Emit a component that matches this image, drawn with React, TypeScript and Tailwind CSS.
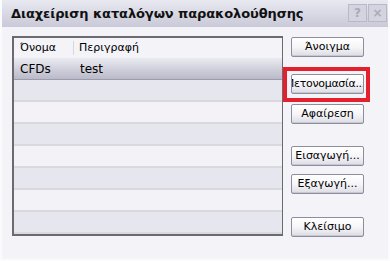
import React from "react";

const font = { fontFamily: "Tahoma, 'DejaVu Sans', 'Noto Sans', sans-serif" };

function Btn({ label, className = "", end = false }: { label: string; className?: string; end?: boolean }) {
  return (
    <div
      className={`w-[73px] h-[20px] flex items-center ${end ? "justify-end" : "justify-center"} overflow-hidden whitespace-nowrap rounded-[2px] border border-[#8d8d9e] bg-gradient-to-b from-[#ffffff] via-[#f6f6f9] to-[#dcdce4] text-[11px] text-black shadow-[inset_0_-1px_0_#c8c8d2] ${className}`}
    >
      <span className={`shrink-0 ${end ? "mr-[-2px] tracking-[-0.3px]" : ""}`}>{label}</span>
    </div>
  );
}

export default function App() {
  const rows = [0, 1, 2, 3, 4, 5, 6];
  return (
    <div className="w-[390px] h-[261px] bg-[#f3f3f8] flex flex-col overflow-hidden border-l-2 border-r-2 border-b-2 border-[#fbfbfd]" style={font}>
      <div className="h-[27px] shrink-0 flex items-center justify-between bg-gradient-to-b from-[#e9e9f1] to-[#c9c9d8] pl-[9px] pr-[1px]">
        <span className="text-[13px] font-bold text-[#111] tracking-[-0.1px]">Διαχείριση καταλόγων παρακολούθησης</span>
        <div className="flex gap-[1px] self-start mt-[4px]">
          <div className="w-[19px] h-[18px] flex items-center justify-center border border-[#b8b8c6] bg-[#d4d4e0] text-[12px] font-bold text-[#a9a9b8]">?</div>
          <div className="w-[19px] h-[18px] flex items-center justify-center border border-[#b8b8c6] bg-[#d4d4e0] text-[12px] font-bold text-[#a9a9b8]">×</div>
        </div>
      </div>
      <div className="flex pt-[9px] pl-[10px]">
        <div className="w-[271px] h-[200px] border-2 border-[#6b6b6f] border-r-[1px] flex flex-col overflow-hidden">
          <div className="h-[20px] shrink-0 flex items-center text-[11px] text-black bg-[#f3f3f8]">
            <div className="w-[60px] pl-[6px] border-r border-[#d6d6de] h-[14px] flex items-center">Όνομα</div>
            <div className="pl-[5px]">Περιγραφή</div>
          </div>
          <div className="h-[22px] shrink-0 flex items-center text-[12px] text-black bg-gradient-to-b from-[#ebebf2] to-[#b9b9c9] border-b border-[#9b9bab]">
            <div className="w-[61px] pl-[6px]">CFDs</div>
            <div className="pl-[5px]">test</div>
          </div>
          {rows.map((i) => (
            <div
              key={i}
              className={`h-[22px] shrink-0 border-b-2 border-[#d9d9df] ${i % 2 === 0 ? "bg-[#e6e6ef]" : "bg-[#f2f2f7]"}`}
            />
          ))}
        </div>
        <div className="ml-[8px] flex flex-col pt-[1px]">
          <Btn label="Άνοιγμα" />
          <div className="relative mt-[17px]">
            <div className="absolute left-[-8px] top-[-7px] w-[87px] h-[35px] border-4 border-[#e3202b]" />
            <Btn label="Μετονομασία..." end />
          </div>
          <Btn label="Αφαίρεση" className="mt-[10px]" />
          <Btn label="Εισαγωγή..." className="mt-[22px]" />
          <Btn label="Εξαγωγή..." className="mt-[8px]" />
          <Btn label="Κλείσιμο" className="mt-[23px]" />
        </div>
      </div>
    </div>
  );
}
